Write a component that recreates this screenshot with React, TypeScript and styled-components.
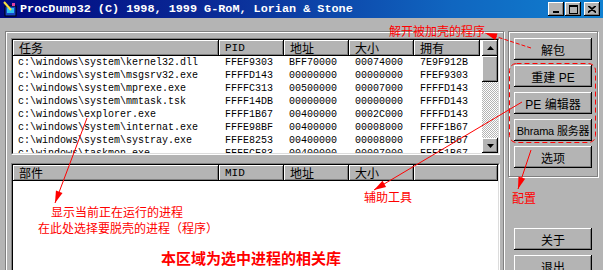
import React from 'react';
import styled, {createGlobalStyle} from 'styled-components';

const FACE = '#b4b4b4';
const CJK = `"Noto Sans CJK SC", "Liberation Sans", sans-serif`;
const LATIN_CJK = `"Liberation Sans", "Noto Sans CJK SC", sans-serif`;
const MONO = `"Liberation Mono", "DejaVu Sans Mono", monospace`;
const RED = '#ff0000';

const TASK_COLS = '206px 65px 65px 65px 66px';
const MOD_COLS = '206px 65px 65px 65px 1fr';

const rows = [
	['c:\\windows\\system\\kernel32.dll', 'FFEF9303', 'BFF70000', '00074000', '7E9F912B'],
	['c:\\windows\\system\\msgsrv32.exe', 'FFFFD143', '00000000', '00000000', 'FFEF9303'],
	['c:\\windows\\system\\mprexe.exe', 'FFFFC313', '00500000', '00007000', 'FFFFD143'],
	['c:\\windows\\system\\mmtask.tsk', 'FFFF14DB', '00000000', '00000000', 'FFFFD143'],
	['c:\\windows\\explorer.exe', 'FFFF1B67', '00400000', '0002C000', 'FFFFD143'],
	['c:\\windows\\system\\internat.exe', 'FFFE98BF', '00400000', '00008000', 'FFFF1B67'],
	['c:\\windows\\system\\systray.exe', 'FFFE8253', '00400000', '00008000', 'FFFF1B67'],
	['c:\\windows\\taskmon.exe', 'FFFECF83', '00400000', '00007000', 'FFFF1B67']
];

const GlobalStyle = createGlobalStyle`
	html, body {
		margin: 0;
		padding: 0;
		background: ${FACE};
	}
	body {
		width: 603px;
		height: 270px;
		overflow: hidden;
	}
`;

const Window = styled.div`
	position: relative;
	width: 603px;
	height: 270px;
	overflow: hidden;
	background: ${FACE};
	display: flex;
	flex-direction: column;
`;

const TitleBar = styled.div`
	height: 18px;
	flex: none;
	display: flex;
	align-items: center;
	padding: 0 3px 0 2px;
	box-sizing: border-box;
	background: linear-gradient(90deg, #000880 0%, #0a2a96 35%, #1066c0 75%, #1080d0 100%);
`;

const TitleText = styled.span`
	flex: 1;
	margin-left: 2px;
	font-family: ${MONO};
	font-weight: bold;
	font-size: 11.8px;
	color: #fff;
	white-space: pre;
`;

const CtrlGroup = styled.div`
	display: flex;
	gap: 1px;
`;

const CtrlButton = styled.div<{$gapBefore?: boolean}>`
	width: 16px;
	height: 14px;
	margin-left: ${p => (p.$gapBefore ? '2px' : '0')};
	background: ${FACE};
	box-shadow: inset -1px -1px #000, inset 1px 1px #fff, inset -2px -2px #808080;
	display: flex;
	align-items: center;
	justify-content: center;
`;

const Body = styled.div`
	flex: 1;
	display: flex;
	align-items: flex-start;
	gap: 4px;
	padding: 13px 0 0 5px;
`;

const LeftGroup = styled.div`
	width: 499px;
	height: 260px;
	box-sizing: border-box;
	border: 1px solid #808080;
	box-shadow: inset 1px 1px #fff, 1px 1px #fff;
	padding: 6px 3px 0 5px;
	display: flex;
	flex-direction: column;
	gap: 8px;
`;

const ListFrame = styled.div<{$height?: number}>`
	height: ${p => (p.$height ? `${p.$height}px` : 'auto')};
	flex: ${p => (p.$height ? 'none' : '1')};
	border: 1px solid;
	border-color: #808080 #fff #fff #808080;
	display: flex;
`;

const ListInner = styled.div`
	flex: 1;
	border: 1px solid;
	border-color: #000 #dcdcdc #dcdcdc #000;
	background: #fff;
	display: flex;
	overflow: hidden;
`;

const Columns = styled.div`
	flex: 1;
	overflow: hidden;
`;

const Grid = styled.div<{$cols: string}>`
	display: grid;
	grid-template-columns: ${p => p.$cols};
`;

const HeadCell = styled.div<{$mono?: boolean}>`
	height: 16px;
	box-sizing: border-box;
	padding-left: 6px;
	background: ${FACE};
	box-shadow: inset -1px -1px #000, inset 1px 1px #fff, inset -2px -2px #808080;
	font-family: ${p => (p.$mono ? MONO : CJK)};
	font-size: ${p => (p.$mono ? '11px' : '12px')};
	line-height: 16px;
	color: #000;
	white-space: nowrap;
	overflow: hidden;
`;

const Cell = styled.div<{$pad?: number}>`
	height: 13px;
	padding-left: ${p => p.$pad ?? 6}px;
	font-family: ${MONO};
	font-size: 10px;
	line-height: 13px;
	color: #000;
	white-space: nowrap;
	overflow: hidden;
`;

const ScrollBar = styled.div`
	width: 16px;
	flex: none;
	display: flex;
	flex-direction: column;
`;

const ScrollButton = styled.div<{$h: number}>`
	height: ${p => p.$h}px;
	flex: none;
	background: ${FACE};
	box-shadow: inset -1px -1px #000, inset 1px 1px #fff, inset -2px -2px #808080;
	display: flex;
	align-items: center;
	justify-content: center;
`;

const ScrollTrack = styled.div`
	flex: 1;
	background: repeating-conic-gradient(#ffffff 0 25%, ${FACE} 0 50%) 0 0 / 2px 2px;
`;

const RightColumn = styled.div`
	width: 90px;
	display: flex;
	flex-direction: column;
`;

const ButtonGroup = styled.div`
	height: 146px;
	box-sizing: border-box;
	border: 1px solid #808080;
	box-shadow: inset 1px 1px #fff, 1px 1px #fff;
	padding: 6px 0 0 5px;
	display: flex;
	flex-direction: column;
	gap: 5px;
`;

const LowerButtons = styled.div`
	margin-top: 51px;
	padding-left: 6px;
	display: flex;
	flex-direction: column;
	gap: 5px;
`;

const Button = styled.div<{$small?: boolean}>`
	width: 78px;
	height: 22px;
	flex: none;
	box-sizing: border-box;
	background: ${FACE};
	box-shadow: inset -1px -1px #000, inset 1px 1px #fff, inset -2px -2px #808080;
	display: flex;
	align-items: center;
	justify-content: center;
	font-family: ${LATIN_CJK};
	font-size: ${p => (p.$small ? '11px' : '12px')};
	letter-spacing: ${p => (p.$small ? '-0.2px' : '0')};
	color: #000;
	white-space: nowrap;
`;

const Overlay = styled.svg`
	position: absolute;
	left: 0;
	top: 0;
	pointer-events: none;
`;

const Note = styled.span<{$left: number; $top: number; $big?: boolean}>`
	position: absolute;
	left: ${p => p.$left}px;
	top: ${p => p.$top}px;
	font-family: ${CJK};
	font-size: ${p => (p.$big ? '15px' : '12px')};
	font-weight: ${p => (p.$big ? 'bold' : 'normal')};
	line-height: ${p => (p.$big ? '16px' : '14px')};
	color: ${RED};
	white-space: nowrap;
`;

const head = (x1: number, y1: number, x2: number, y2: number, len: number, w: number) => {
	const dx = x2 - x1;
	const dy = y2 - y1;
	const d = Math.hypot(dx, dy);
	const ux = dx / d;
	const uy = dy / d;
	const bx = x2 - ux * len;
	const by = y2 - uy * len;
	const px = (-uy * w) / 2;
	const py = (ux * w) / 2;
	return `${x2},${y2} ${bx + px},${by + py} ${bx - px},${by - py}`;
};

const Arrow = ({x1, y1, x2, y2, dashed}: {x1: number; y1: number; x2: number; y2: number; dashed?: boolean}) => (
	<g>
		<line x1={x1} y1={y1} x2={x2} y2={y2} stroke={RED} strokeWidth={1} strokeDasharray={dashed ? '4 2' : undefined} />
		<polygon points={head(x1, y1, x2, y2, 12, 7)} fill={RED} />
	</g>
);

const AppIcon = () => (
	<svg width='16' height='16' viewBox='0 0 16 16'>
		<rect x='3' y='5' width='11' height='10' fill='#1848c8' stroke='#000' />
		<rect x='5' y='7' width='7' height='5' fill='#30c0f0' />
		<line x1='2' y1='1' x2='9' y2='9' stroke='#f8e040' strokeWidth='2' />
		<rect x='10' y='2' width='3' height='3' fill='#e040a0' />
	</svg>
);

const Arrowhead = ({up}: {up?: boolean}) => (
	<svg width='7' height='4' viewBox='0 0 7 4'>
		<polygon points={up ? '3.5,0 7,4 0,4' : '0,0 7,0 3.5,4'} fill='#000' />
	</svg>
);

const TaskList = () => (
	<ListFrame $height={115}>
		<ListInner>
			<Columns>
				<Grid $cols={TASK_COLS}>
					<HeadCell>任务</HeadCell>
					<HeadCell $mono>PID</HeadCell>
					<HeadCell>地址</HeadCell>
					<HeadCell>大小</HeadCell>
					<HeadCell>拥有</HeadCell>
				</Grid>
				{rows.map(r => (
					<Grid $cols={TASK_COLS} key={r[0] + r[1]}>
						<Cell $pad={5}>{r[0]}</Cell>
						<Cell>{r[1]}</Cell>
						<Cell $pad={5}>{r[2]}</Cell>
						<Cell>{r[3]}</Cell>
						<Cell>{r[4]}</Cell>
					</Grid>
				))}
			</Columns>
			<ScrollBar>
				<ScrollButton $h={16}>
					<Arrowhead up />
				</ScrollButton>
				<ScrollButton $h={26} />
				<ScrollTrack />
				<ScrollButton $h={15}>
					<Arrowhead />
				</ScrollButton>
			</ScrollBar>
		</ListInner>
	</ListFrame>
);

const ModuleList = () => (
	<ListFrame>
		<ListInner>
			<Columns>
				<Grid $cols={MOD_COLS}>
					<HeadCell>部件</HeadCell>
					<HeadCell $mono>MID</HeadCell>
					<HeadCell>地址</HeadCell>
					<HeadCell>大小</HeadCell>
					<HeadCell />
				</Grid>
			</Columns>
		</ListInner>
	</ListFrame>
);

export default function App() {
	return (
		<Window>
			<GlobalStyle />
			<TitleBar>
				<AppIcon />
				<TitleText>ProcDump32 (C) 1998, 1999 G-RoM, Lorian &amp; Stone</TitleText>
				<CtrlGroup>
					<CtrlButton>
						<svg width='8' height='8' viewBox='0 0 8 8'>
							<rect x='1' y='6' width='6' height='2' fill='#000' />
						</svg>
					</CtrlButton>
					<CtrlButton>
						<svg width='9' height='9' viewBox='0 0 9 9'>
							<rect x='0.5' y='0.5' width='8' height='8' fill='none' stroke='#000' />
							<rect x='0' y='1' width='9' height='1' fill='#000' />
						</svg>
					</CtrlButton>
					<CtrlButton $gapBefore>
						<svg width='8' height='7' viewBox='0 0 8 7'>
							<path d='M0 0 L8 7 M1 0 L8 6 M8 0 L0 7 M7 0 L0 6' stroke='#000' strokeWidth='1.1' />
						</svg>
					</CtrlButton>
				</CtrlGroup>
			</TitleBar>
			<Body>
				<LeftGroup>
					<TaskList />
					<ModuleList />
				</LeftGroup>
				<RightColumn>
					<ButtonGroup>
						<Button>解包</Button>
						<Button>重建 PE</Button>
						<Button>PE 编辑器</Button>
						<Button $small>Bhrama 服务器</Button>
						<Button>选项</Button>
					</ButtonGroup>
					<LowerButtons>
						<Button>关于</Button>
						<Button>退出</Button>
					</LowerButtons>
				</RightColumn>
			</Body>

			<Overlay width='603' height='270' viewBox='0 0 603 270'>
				<rect x='509.5' y='63.5' width='86' height='79' rx='7' fill='none' stroke={RED} strokeDasharray='5 3' />
				<Arrow x1={531} y1={48} x2={485} y2={33} dashed />
				<Arrow x1={87} y1={118} x2={55} y2={203} />
				<Arrow x1={522} y1={102} x2={374} y2={190} />
				<Arrow x1={531} y1={150} x2={518} y2={189} />
			</Overlay>
			<Note $left={389} $top={24}>解开被加壳的程序</Note>
			<Note $left={51} $top={205}>显示当前正在运行的进程</Note>
			<Note $left={38} $top={221}>在此处选择要脱壳的进程（程序）</Note>
			<Note $left={364} $top={190}>辅助工具</Note>
			<Note $left={512} $top={191}>配置</Note>
			<Note $left={161} $top={250} $big>本区域为选中进程的相关库</Note>
		</Window>
	);
}
